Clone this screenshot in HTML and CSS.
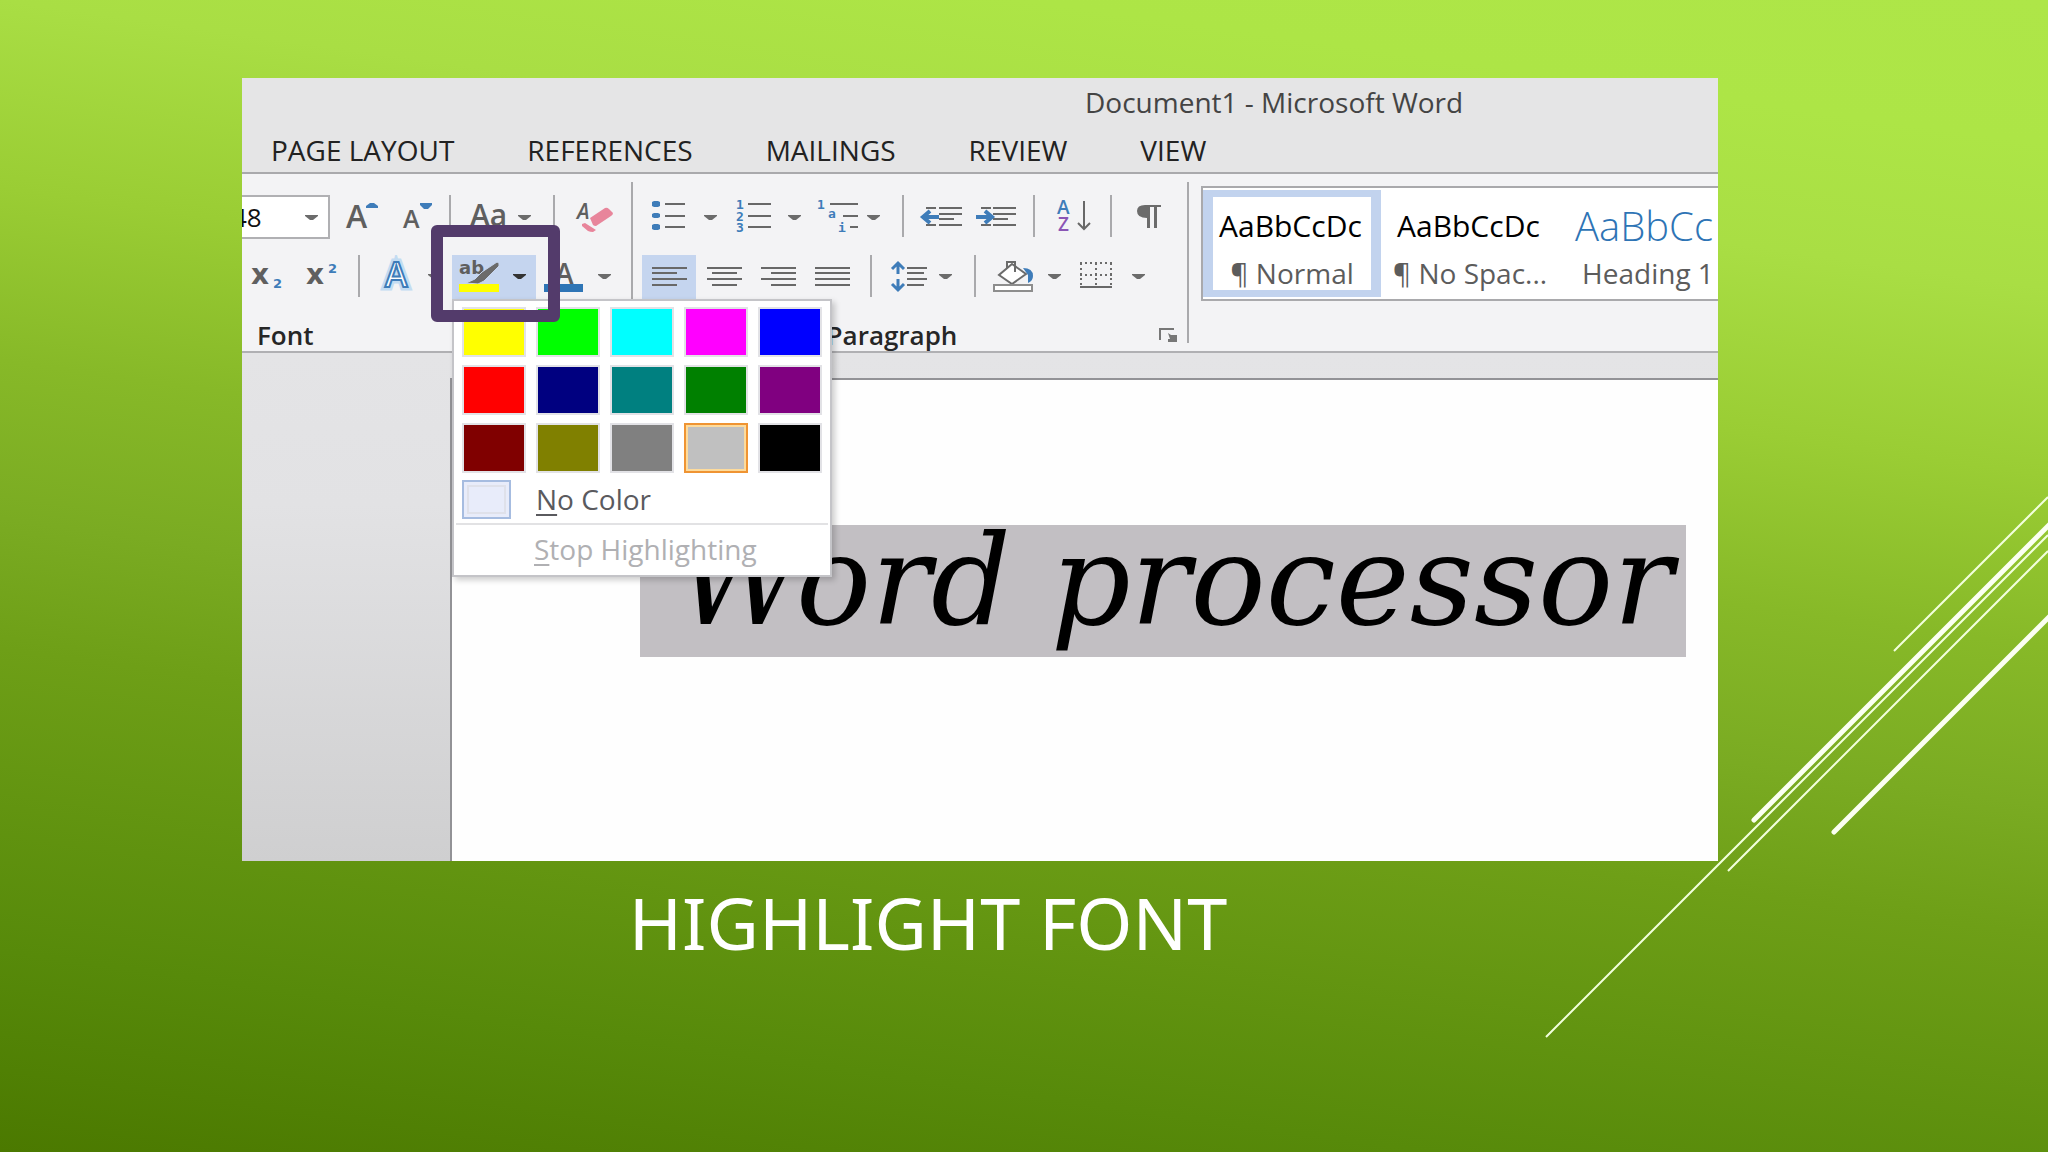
FILE: index.html
```html
<!DOCTYPE html>
<html lang="en">
<head>
<meta charset="utf-8">
<title>Highlight Font</title>
<link rel="stylesheet" href="styles.css">
</head>
<body>
<svg class="defs" aria-hidden="true">
  <symbol id="arrow" viewBox="0 0 13 6" overflow="visible"><path d="M0 0h13v1l-5 4h-3l-5-4z"/></symbol>
</svg>
<main class="slide">
  <section class="window">
    <header class="titlebar">Document1 - Microsoft Word</header>
    <nav class="tabs">
      <a href="#layout">PAGE LAYOUT</a>
      <a href="#references">REFERENCES</a>
      <a href="#mailings">MAILINGS</a>
      <a href="#review">REVIEW</a>
      <a href="#view">VIEW</a>
    </nav>

    <div class="ribbon">
      <div class="group font-group">
        <div class="row">
          <div class="size-box">
            <select class="size" aria-label="Font size"><option>48</option></select>
            <svg class="size-arrow" width="13" height="6"><use href="#arrow" width="13" height="6"/></svg>
          </div>
          <button class="tool" aria-label="Grow font"><svg width="60" height="44" viewBox="330 195 60 44"><text class="g" x="346" y="228" font-size="32">A</text><path class="b" d="M366 208v-2l4-3h4l4 3v2z"/></svg></button>
          <button class="tool" aria-label="Shrink font"><svg width="56" height="44" viewBox="390 195 56 44"><text class="g" x="403" y="228" font-size="25">A</text><path class="b" d="M420 203h12v2l-4 4h-4l-4-4z"/></svg></button>
          <span class="sep"></span>
          <button class="tool" aria-label="Change case"><svg width="96" height="44" viewBox="454 195 96 44"><text class="g" x="470" y="226" font-size="30">Aa</text><use href="#arrow" x="518" y="215" width="13" height="6"/></svg></button>
          <span class="sep"></span>
          <button class="tool" aria-label="Clear formatting"><svg width="72" height="44" viewBox="558 195 72 44"><text class="g" x="577" y="219" font-size="21" font-style="italic">A</text><path fill="#e8859b" d="M590 218l15-10q2-1 4 1l4 4q0 2-2 3l-15 10q-2 0-3-1zM582 224l3-1 11 7-3 2q-3 0-5-1l-6-5z"/></svg></button>
        </div>
        <div class="row">
          <button class="tool" aria-label="Subscript"><svg width="52" height="44" viewBox="242 255 52 44"><text class="g bold" x="251" y="284" font-size="28">x</text><text class="b bold" x="273" y="288" font-size="13">2</text></svg></button>
          <button class="tool" aria-label="Superscript"><svg width="61" height="44" viewBox="294 255 61 44"><text class="g bold" x="306" y="284" font-size="28">x</text><text class="b bold" x="328" y="273" font-size="13">2</text></svg></button>
          <span class="sep"></span>
          <button class="tool" aria-label="Text effects"><svg width="89" height="44" viewBox="363 255 89 44"><text class="halo" x="385" y="287" font-size="34">A</text><text class="outline" x="385" y="287" font-size="34">A</text><use href="#arrow" x="428" y="274" width="13" height="6"/></svg></button>
          <div class="highlight">
            <button class="tool active" aria-label="Text highlight color" aria-expanded="true"><svg width="84" height="44" viewBox="452 255 84 44"><text class="g bold" x="459" y="274" font-size="18">ab</text><path fill="#6b6b6b" stroke="#c7d6ef" d="M497 262l-15 10-7 7-9 4 12 1 6-3 15-15v-3z"/><path fill="#ff0" d="M459 284h40v8h-40z"/><use class="dark" href="#arrow" x="513" y="274" width="13" height="6"/></svg></button>
            <div class="popup">
              <div class="swatches">
                <button class="sw yellow" aria-label="Yellow"></button>
                <button class="sw green" aria-label="Bright green"></button>
                <button class="sw cyan" aria-label="Turquoise"></button>
                <button class="sw pink" aria-label="Pink"></button>
                <button class="sw blue" aria-label="Blue"></button>
                <button class="sw red" aria-label="Red"></button>
                <button class="sw navy" aria-label="Dark blue"></button>
                <button class="sw teal" aria-label="Teal"></button>
                <button class="sw forest" aria-label="Green"></button>
                <button class="sw violet" aria-label="Violet"></button>
                <button class="sw maroon" aria-label="Dark red"></button>
                <button class="sw olive" aria-label="Dark yellow"></button>
                <button class="sw gray" aria-label="Gray 50%"></button>
                <button class="sw silver" aria-label="Gray 25%"></button>
                <button class="sw black" aria-label="Black"></button>
              </div>
              <button class="item"><span class="none"></span><span><u>N</u>o Color</span></button>
              <button class="item stop" disabled><span><u>S</u>top Highlighting</span></button>
            </div>
            <div class="marker"></div>
          </div>
          <button class="tool" aria-label="Font color"><svg width="88" height="44" viewBox="536 255 88 44"><text class="g" x="555" y="284" font-size="28">A</text><path fill="#2e75b6" d="M544 284h39v8h-39z"/><use href="#arrow" x="598" y="274" width="13" height="6"/></svg></button>
        </div>
        <div class="label"><span>Font</span></div>
      </div>

      <div class="group para-group">
        <div class="row">
          <button class="tool" aria-label="Bullets"><svg width="91" height="44" viewBox="633 195 91 44"><path class="b" d="M654 201h4l2 1v4l-2 1h-4l-2-1v-4zM654 213h4l2 1v3l-2 1h-4l-2-1v-3zM654 224h4l2 1v4l-2 1h-4l-2-1v-4z"/><path class="l" d="M665 204h20M665 216h20M665 227h20"/><use href="#arrow" x="704" y="215" width="13" height="6"/></svg></button>
          <button class="tool" aria-label="Numbering"><svg width="84" height="44" viewBox="724 195 84 44"><g class="b mono" font-size="13"><text x="736" y="209">1</text><text x="736" y="221">2</text><text x="736" y="232">3</text></g><path class="l" d="M748 204h23M748 216h23M748 227h23"/><use href="#arrow" x="788" y="215" width="13" height="6"/></svg></button>
          <button class="tool" aria-label="Multilevel list"><svg width="91" height="44" viewBox="808 195 91 44"><g class="b mono" font-size="13"><text x="817" y="209">1</text><text x="828" y="218">a</text><text x="838" y="232">i</text></g><path class="l" d="M830 204h28M843 216h15M850 227h8"/><use href="#arrow" x="867" y="215" width="13" height="6"/></svg></button>
          <span class="sep"></span>
          <button class="tool" aria-label="Decrease indent"><svg width="63" height="44" viewBox="907 195 63 44"><path class="l" d="M926 208h10M926 225h10M939 208h23M939 214h23M939 219h15M939 225h23"/><path class="arr" d="M939 217h-15M930 211l-7 6 7 6"/></svg></button>
          <button class="tool" aria-label="Increase indent"><svg width="60" height="44" viewBox="970 195 60 44"><path class="l" d="M981 208h10M981 225h10M993 208h23M993 214h23M993 219h15M993 225h23"/><path class="arr" d="M976 217h15M985 211l7 6-7 6"/></svg></button>
          <span class="sep"></span>
          <button class="tool" aria-label="Sort"><svg width="69" height="44" viewBox="1038 195 69 44"><text class="b" x="1057" y="214" font-size="19">A</text><text fill="#8a55b5" x="1058" y="231" font-size="19">Z</text><path class="l" d="M1084 201v28M1078 223l6 6 6-6"/></svg></button>
          <span class="sep"></span>
          <button class="tool" aria-label="Show paragraph marks"><svg width="65" height="44" viewBox="1115 195 65 44"><path fill="#6b6b6b" d="M1161 205v2h-4v21h-3v-21h-4v21h-3v-10q-10 0-10-7 0-6 8-6z"/></svg></button>
        </div>
        <div class="row aligned">
          <button class="tool active" aria-label="Align left"><svg width="54" height="44" viewBox="642 255 54 44"><path class="l" d="M652 268h35M652 273h25M652 279h35M652 285h25"/></svg></button>
          <button class="tool" aria-label="Center"><svg width="54" height="44" viewBox="696 255 54 44"><path class="l" d="M707 268h35M712 273h25M707 279h35M712 285h25"/></svg></button>
          <button class="tool" aria-label="Align right"><svg width="54" height="44" viewBox="750 255 54 44"><path class="l" d="M761 268h35M771 273h25M761 279h35M771 285h25"/></svg></button>
          <button class="tool" aria-label="Justify"><svg width="63" height="44" viewBox="804 255 63 44"><path class="l" d="M815 268h35M815 273h35M815 279h35M815 285h35"/></svg></button>
          <span class="sep"></span>
          <button class="tool" aria-label="Line spacing"><svg width="96" height="44" viewBox="875 255 96 44"><path class="l" d="M907 268h20M907 273h17M907 279h20M907 285h17"/><path class="arr slim" d="M898 274v-11M892 269l6-6 6 6M898 279v11M892 284l6 6 6-6"/><use href="#arrow" x="939" y="274" width="13" height="6"/></svg></button>
          <span class="sep"></span>
          <button class="tool" aria-label="Shading"><svg width="91" height="44" viewBox="979 255 91 44"><path fill="#fff" stroke="#6b6b6b" stroke-width="2" d="M1012 264l14 10-14 10-13-9zM1007 268v-6h8v10"/><path class="b" d="M1023 268q10 0 10 8 0 5-5 7v-8z"/><path fill="#fff" stroke="#8d8d8d" stroke-width="2" d="M994 285h38v6h-38z"/><use href="#arrow" x="1048" y="274" width="13" height="6"/></svg></button>
          <button class="tool" aria-label="Borders"><svg width="90" height="44" viewBox="1070 255 90 44"><path class="dots" d="M1080 263h32M1080 275h32M1081 263v22M1096 263v22M1111 263v22"/><path class="l" d="M1080 287h32"/><use href="#arrow" x="1132" y="274" width="13" height="6"/></svg></button>
        </div>
        <div class="label centered"><span>Paragraph</span><button class="launcher" aria-label="Paragraph settings"><svg width="18" height="14"><path fill="none" stroke="#777" stroke-width="2" d="M1 12v-11h14"/><path fill="#777" d="M9 5l3 2h6v7h-9v-3h2z"/></svg></button></div>
      </div>

      <div class="gallery">
        <button class="style selected"><span class="sample">AaBbCcDc</span><span class="name">¶ Normal</span></button>
        <button class="style"><span class="sample">AaBbCcDc</span><span class="name">¶ No Spac...</span></button>
        <button class="style"><span class="sample heading">AaBbCc</span><span class="name">Heading 1</span></button>
      </div>
    </div>

    <div class="workspace">
      <div class="page"><p class="line">Word processor</p></div>
    </div>
  </section>
  <h1 class="caption">HIGHLIGHT FONT</h1>
  <svg class="rays" width="504" height="542" viewBox="1544 496 504 542" aria-hidden="true">
    <path d="M1894 651L2048 497M1546 1037L2048 535M1728 871L2048 551"/>
    <path class="thick" d="M1754 820L2050 524M1834 832L2050 616"/>
  </svg>
</main>
</body>
</html>
```

FILE: styles.css
```css
* { box-sizing: border-box; }

body {
  margin: 0;
  font-family: "Open Sans", "Noto Sans", sans-serif;
  font-size: 28px;
  color: #262626;
}

button {
  margin: 0;
  padding: 0;
  border: 0;
  background: none;
  font: inherit;
  color: inherit;
}

.defs { position: absolute; width: 0; height: 0; }

.slide {
  position: relative;
  min-height: 100vh;
  padding: 78px 330px 0 242px;
  overflow: hidden;
  background: linear-gradient(188deg, #aee648 0%, #ade546 10%, #a9de44 20%, #9acd34 33%, #87b928 45%, #7aab22 56%, #6e9f17 65%, #578a0a 86%, #4b7900 100%);
}

.window {
  position: relative;
  overflow: hidden;
  background: #e5e5e6;
}

.titlebar {
  height: 48px;
  padding-left: 843px;
  line-height: 48px;
  white-space: nowrap;
  color: #444;
}

.tabs {
  display: flex;
  gap: 73px;
  height: 48px;
  padding-left: 29px;
  border-bottom: 2px solid #a9a9ac;
  line-height: 48px;
  white-space: nowrap;
}

.tabs a { color: #222; text-decoration: none; }

/* Ribbon */
.ribbon {
  display: flex;
  height: 179px;
  background: #f3f3f5;
  border-bottom: 2px solid #b0b0b3;
}

.group {
  position: relative;
  flex: none;
  padding-top: 21px;
}

.group::after {
  content: "";
  position: absolute;
  top: 8px;
  right: 0;
  width: 2px;
  height: 161px;
  background: #a9a9ac;
}

.font-group { width: 391px; z-index: 2; }
.para-group { width: 556px; }

.row { display: flex; height: 44px; margin-bottom: 16px; }
.row.aligned { padding-left: 9px; }

.tool { display: block; flex: none; height: 44px; }
.tool svg { display: block; fill: #6b6b6b; }
.tool.active { background: #c5d5ef; }

.tool text { font-family: "Open Sans", sans-serif; font-weight: 600; }
.tool text.bold { font-family: "DejaVu Sans", sans-serif; font-weight: 700; }
.tool .mono text { font-family: "DejaVu Sans Mono", monospace; font-weight: 700; }
.g { fill: #5f5f5f; }
.b { fill: #3e7cb9; }
.l { fill: none; stroke: #686868; stroke-width: 2; }
.arr { fill: none; stroke: #3e7cb9; stroke-width: 4; }
.arr.slim { stroke-width: 3; }
.dark { fill: #333; }
.dots { fill: none; stroke: #6b6b6b; stroke-width: 2; stroke-dasharray: 2 3; }
.halo { fill: none; stroke: #c3dcf2; stroke-width: 7; }
.outline { fill: #fff; stroke: #3e7cb9; stroke-width: 2; }

.sep {
  flex: none;
  width: 8px;
  height: 42px;
  border: solid transparent;
  border-width: 0 3px;
  background: #a9a9ac;
  background-clip: padding-box;
}

.size-box { position: relative; width: 88px; }

.size {
  appearance: none;
  width: 100px;
  height: 44px;
  margin-left: -12px;
  padding: 0;
  border: 2px solid #b0b0b3;
  border-radius: 0;
  background: #fff;
  font: 26px "Open Sans", sans-serif;
  line-height: 40px;
  color: #111;
}

.size-arrow { position: absolute; right: 12px; top: 20px; fill: #6b6b6b; }

.label {
  display: flex;
  align-items: center;
  height: 32px;
  margin-top: 20px;
  padding-left: 15px;
  font-size: 26px;
  font-weight: 600;
  line-height: 32px;
}

.label.centered { padding: 0 12px 0 0; }
.label.centered span { flex: 1; padding-right: 8px; text-align: center; }
.launcher { height: 14px; }
.launcher svg { display: block; }

/* Highlight colour menu */
.highlight { position: relative; z-index: 3; }

.popup {
  position: absolute;
  top: 44px;
  left: 0;
  width: 380px;
  height: 278px;
  padding: 6px 2px;
  background: #fff;
  border: 2px solid #c4c4c8;
  box-shadow: 3px 3px 6px #0003;
}

.swatches {
  display: grid;
  grid-template-columns: repeat(5, 64px);
  gap: 8px 10px;
  margin-bottom: 2px;
  padding-left: 6px;
}

.sw { height: 50px; border: 2px solid #e2e2e6; }
.yellow { background: #ff0; }
.green { background: #0f0; }
.cyan { background: #0ff; }
.pink { background: #f0f; }
.blue { background: #00f; }
.red { background: #f00; }
.navy { background: #000080; }
.teal { background: #008080; }
.forest { background: #008000; }
.violet { background: #800080; }
.maroon { background: #800000; }
.olive { background: #808000; }
.gray { background: #808080; }
.silver { background: #c0c0c0; border-color: #ef9433; box-shadow: inset 0 0 0 2px #fddb9c; }
.black { background: #000; }

.item {
  display: flex;
  align-items: center;
  gap: 25px;
  width: 100%;
  height: 48px;
  padding-left: 6px;
  line-height: 34px;
  white-space: nowrap;
  color: #5a5a5e;
}

.item u { text-underline-offset: 4px; text-decoration-thickness: 2px; }

.none {
  width: 49px;
  height: 39px;
  border: 2px solid #a6bce0;
  background: #e8ecfa;
  box-shadow: inset 0 0 0 3px #e8ecfa, inset 0 0 0 5px #dfe1ea;
}

.stop { height: 50px; padding-left: 78px; border-top: 2px solid #e2e2e4; color: #b0b0b3; }

.marker {
  position: absolute;
  top: -30px;
  left: -21px;
  width: 129px;
  height: 97px;
  border: 12px solid #533b6b;
  border-radius: 6px;
}

/* Style gallery */
.gallery {
  display: flex;
  flex: 1;
  min-width: 0;
  height: 115px;
  margin: 12px 0 0 12px;
  padding: 2px 0;
  overflow: hidden;
  background: #fff;
  border: 2px solid #a9a9ac;
  border-right: 0;
}

.style {
  display: flex;
  flex-direction: column;
  justify-content: flex-end;
  flex: none;
  width: 178px;
  height: 107px;
  padding: 0 6px;
  border: solid transparent;
  border-width: 7px 10px;
  text-align: center;
  white-space: nowrap;
}

.selected { border-color: #c2d3ee; }

.sample {
  height: 54px;
  text-align: left;
  font-size: 30px;
  line-height: 48px;
  color: #000;
}

.sample.heading { font-size: 40px; font-weight: 300; color: #2e74b5; }

.name {
  display: flex;
  justify-content: center;
  height: 34px;
  margin: 0 -10px;
  line-height: 34px;
  color: #5c5c5c;
}

/* Document */
.workspace {
  padding: 25px 0 0 208px;
  background: linear-gradient(#e4e4e6, #e2e2e4 30%, #cfcfd0);
}

.page {
  height: 483px;
  padding: 145px 32px 0 188px;
  border-top: 2px solid #929296;
  border-left: 2px solid #929296;
  background: #fefefe;
}

.line {
  height: 132px;
  margin: 0;
  padding-left: 36px;
  background: #c2bfc3;
  font: italic 125px "DejaVu Serif", serif;
  line-height: 112px;
  white-space: nowrap;
  color: #000;
}

.caption {
  margin: 8px 104px 0 0;
  font: 400 72px "Noto Sans", sans-serif;
  line-height: 106px;
  text-align: center;
  white-space: nowrap;
  color: #fff;
}

.rays {
  position: absolute;
  right: 0;
  top: 496px;
  fill: none;
  stroke: #f2ffdc;
  stroke-width: 2;
}

.rays .thick { stroke: #fbfff2; stroke-width: 5; stroke-linecap: round; }
```
